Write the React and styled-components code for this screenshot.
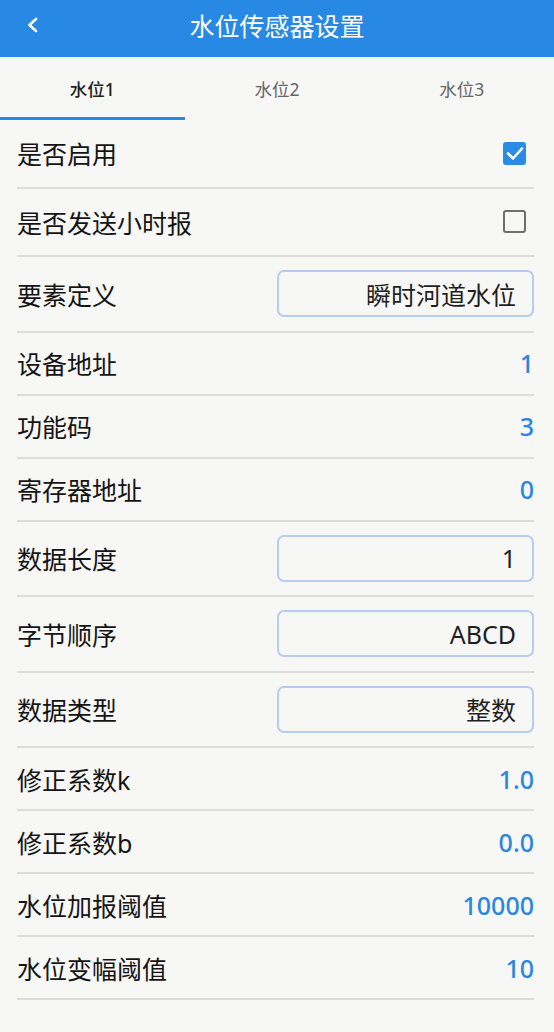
import React from 'react'
import styled, { createGlobalStyle } from 'styled-components'

const GlobalStyle = createGlobalStyle`
  body {
    margin: 0;
    background: #f7f7f6;
    font-family: "Noto Sans", "Noto Sans CJK SC", sans-serif;
  }
`

const Page = styled.div`
  width: 554px;
  min-height: 1032px;
  background: #f7f7f6;
`

const Header = styled.header`
  height: 57px;
  background: #2889e5;
  display: grid;
  grid-template-columns: 70px 1fr 70px;
  align-items: center;
`

const BackButton = styled.div`
  display: flex;
  align-items: center;
  padding-left: 26px;
  height: 100%;
  padding-bottom: 8px;
  box-sizing: border-box;
`

const Title = styled.h1`
  margin: 0 0 8px;
  text-align: center;
  color: #ffffff;
  font-size: 25px;
  font-weight: 400;
`

const Tabs = styled.nav`
  display: grid;
  grid-template-columns: repeat(3, 1fr);
  height: 63px;
`

const Tab = styled.div`
  display: flex;
  align-items: center;
  justify-content: center;
  font-size: 17.5px;
  font-weight: ${p => (p.$active ? 500 : 400)};
  color: ${p => (p.$active ? '#222222' : '#666666')};
  border-bottom: 3px solid ${p => (p.$active ? '#2d88e0' : 'transparent')};
  padding-top: 3px;
`

const List = styled.div`
  padding: 0 20px 0 17px;
`

const heights = { check: 68.5, text: 63, box: 75.5 }

const Row = styled.div`
  display: flex;
  align-items: center;
  justify-content: space-between;
  height: ${p => heights[p.$kind]}px;
  border-bottom: 2px solid #dcdcdc;
  box-sizing: border-box;
`

const Label = styled.span`
  font-size: 25px;
  color: #141414;
`

const Value = styled.span`
  font-size: 25px;
  font-weight: 500;
  color: #2b87de;
`

const Field = styled.div`
  width: 257px;
  height: 47px;
  box-sizing: border-box;
  border: 2px solid #b6cdef;
  border-radius: 7px;
  display: flex;
  align-items: center;
  justify-content: flex-end;
  padding-right: 16px;
  font-size: 25px;
  color: #1f1f1f;
`

const Box = styled.div`
  width: 23px;
  height: 23px;
  margin-right: 8px;
  box-sizing: border-box;
  border-radius: 3px;
  background: ${p => (p.$checked ? '#2a8ae6' : 'transparent')};
  border: 2px solid ${p => (p.$checked ? '#2a8ae6' : '#6e6e6e')};
  display: flex;
  align-items: center;
  justify-content: center;
`

const Checkbox = ({ checked }) => (
  <Box $checked={checked}>
    {checked && (
      <svg width="23" height="23" viewBox="0 0 23 23" style={{ flex: 'none' }}>
        <path d="M5 11.5 L10 16.5 L19 6.5" fill="none" stroke="#fff" strokeWidth="2.6" strokeLinecap="round" strokeLinejoin="round" />
      </svg>
    )}
  </Box>
)

const rows = [
  { label: '是否启用', type: 'check', value: true },
  { label: '是否发送小时报', type: 'check', value: false },
  { label: '要素定义', type: 'box', value: '瞬时河道水位' },
  { label: '设备地址', type: 'text', value: '1' },
  { label: '功能码', type: 'text', value: '3' },
  { label: '寄存器地址', type: 'text', value: '0' },
  { label: '数据长度', type: 'box', value: '1' },
  { label: '字节顺序', type: 'box', value: 'ABCD' },
  { label: '数据类型', type: 'box', value: '整数' },
  { label: '修正系数k', type: 'text', value: '1.0' },
  { label: '修正系数b', type: 'text', value: '0.0' },
  { label: '水位加报阈值', type: 'text', value: '10000' },
  { label: '水位变幅阈值', type: 'text', value: '10' },
]

function App() {
  return (
    <>
      <GlobalStyle />
      <Page>
        <Header>
          <BackButton>
            <svg width="14" height="16" viewBox="0 0 14 16">
              <path d="M10 2 L3.5 8 L10 14" fill="none" stroke="#fff" strokeWidth="2.6" strokeLinecap="round" strokeLinejoin="round" />
            </svg>
          </BackButton>
          <Title>水位传感器设置</Title>
          <div />
        </Header>
        <Tabs>
          <Tab $active>水位1</Tab>
          <Tab>水位2</Tab>
          <Tab>水位3</Tab>
        </Tabs>
        <List>
          {rows.map(r => (
            <Row key={r.label} $kind={r.type}>
              <Label>{r.label}</Label>
              {r.type === 'check' && <Checkbox checked={r.value} />}
              {r.type === 'text' && <Value>{r.value}</Value>}
              {r.type === 'box' && <Field>{r.value}</Field>}
            </Row>
          ))}
        </List>
      </Page>
    </>
  )
}

export default App
